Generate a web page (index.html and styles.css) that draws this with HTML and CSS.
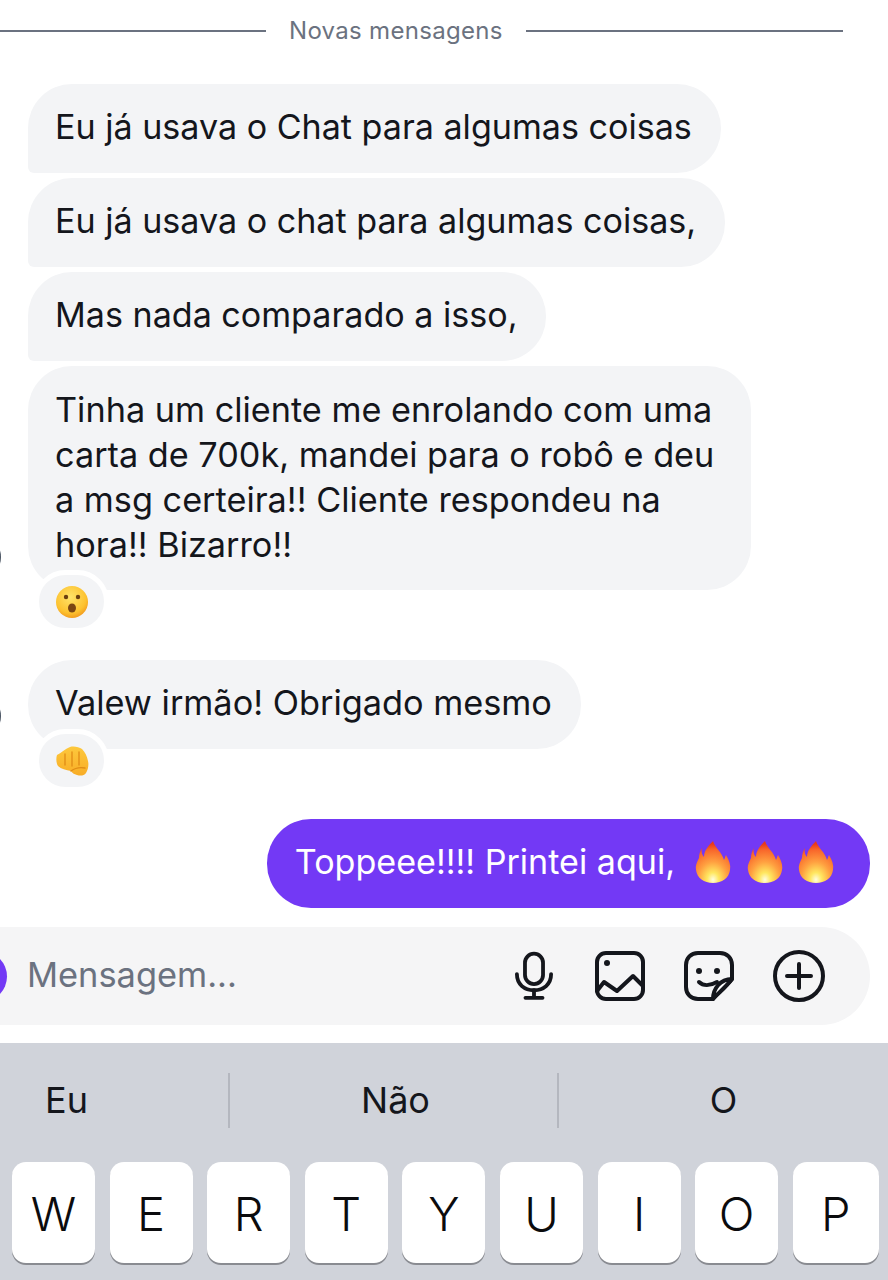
FILE: index.html
```html
<!DOCTYPE html>
<html lang="pt">

<head>
    <meta charset="UTF-8">
    <meta name="viewport" content="width=device-width, initial-scale=1.0">
    <title>Mensagens</title>
    <link rel="stylesheet" href="styles.css">
</head>

<body>
    <svg class="defs" width="0" height="0">
        <defs>
            <radialGradient id="fireFill" cx="50%" cy="92%" r="85%">
                <stop offset="0" stop-color="#fffde0"></stop>
                <stop offset="0.2" stop-color="#ffe760"></stop>
                <stop offset="0.5" stop-color="#ffa040"></stop>
                <stop offset="0.85" stop-color="#f8642a"></stop>
                <stop offset="1" stop-color="#e8391c"></stop>
            </radialGradient>
            <radialGradient id="faceFill" cx="45%" cy="35%" r="70%">
                <stop offset="0" stop-color="#ffe36a"></stop>
                <stop offset="0.7" stop-color="#fdc22f"></stop>
                <stop offset="1" stop-color="#f0921a"></stop>
            </radialGradient>
            <linearGradient id="fistFill" x1="0" y1="0" x2="0" y2="1">
                <stop offset="0" stop-color="#fdc83c"></stop>
                <stop offset="1" stop-color="#f8ad27"></stop>
            </linearGradient>
            <symbol id="fire" viewBox="0 0 36 44">
                <path fill="url(#fireFill)" d="M18 1C20 8 27 12 29 20C30 18 30 17 31 15C34 20 36 25 35 30C34 38 27 43 18 43C9 43 2 38 1 30C0 26 2 22 4 18C4 14 5 11 7 8C6 12 7 15 9 17C9 11 13 6 18 1Z"></path>
            </symbol>
        </defs>
    </svg>

    <div class="page">
        <div class="divider">
            <span class="line first"></span>
            <span class="label">Novas mensagens</span>
            <span class="line"></span>
        </div>

        <div class="thread">
            <div class="bubble">Eu já usava o Chat para algumas coisas</div>
            <div class="bubble">Eu já usava o chat para algumas coisas,</div>
            <div class="bubble">Mas nada comparado a isso,</div>
            <div class="bubble wide has_react">
                Tinha um cliente me enrolando com uma carta de 700k, mandei para o robô e deu a msg certeira!! Cliente respondeu na hora!! Bizarro!!
                <span class="avatar"></span>
                <span class="react">
                    <svg width="34" height="34" viewBox="0 0 34 34">
                        <circle cx="17" cy="17" r="16" fill="url(#faceFill)"></circle>
                        <circle cx="11" cy="12" r="2.2" fill="#6b3f10"></circle>
                        <circle cx="23" cy="12" r="2.2" fill="#6b3f10"></circle>
                        <ellipse cx="17" cy="23" rx="4" ry="4.6" fill="#7a4512"></ellipse>
                    </svg>
                </span>
            </div>
            <div class="bubble solo has_react">
                Valew irmão! Obrigado mesmo
                <span class="avatar"></span>
                <span class="react">
                    <svg width="34" height="34" viewBox="0 0 34 34">
                        <path fill="url(#fistFill)" d="M2 11C6 9 10 5 15 3C19 2 24 3 27 5C30 8 32 12 33 17C34 21 33 26 31 29C29 32 25 32 22 31C19 30 17 29 16 27C11 26 6 25 3 22C1 19 1 14 2 11Z"></path>
                        <path fill="none" stroke="#e08c16" stroke-width="1.3" stroke-linecap="round" d="M10 10V21M17 8V22M24 8V21M16 27C20 24 25 23 30 24"></path>
                    </svg>
                </span>
            </div>
            <div class="bubble mine">
                <span>Toppeee!!!! Printei aqui,</span>
                <span class="fires">
                    <svg width="36" height="44"><use href="#fire"></use></svg>
                    <svg width="36" height="44"><use href="#fire"></use></svg>
                    <svg width="36" height="44"><use href="#fire"></use></svg>
                </span>
            </div>
        </div>

        <div class="composer">
            <span class="camera"></span>
            <span class="placeholder">Mensagem...</span>
            <div class="tools">
                <svg class="mic" width="38" height="50" viewBox="0 0 40 52" fill="none" stroke="#14161c" stroke-width="4" stroke-linecap="round">
                    <rect x="10.5" y="2.5" width="19" height="32" rx="9.5"></rect>
                    <path d="M2 24C2 35 10 41 20 41C30 41 38 35 38 24"></path>
                    <path d="M20 41V49M11 49H29"></path>
                </svg>
                <svg width="50" height="50" viewBox="0 0 50 50" fill="none" stroke="#14161c" stroke-width="4" stroke-linecap="round" stroke-linejoin="round">
                    <rect x="2" y="2" width="46" height="46" rx="9"></rect>
                    <circle cx="12" cy="12" r="3" fill="#14161c" stroke="none"></circle>
                    <path d="M2 40L9 31L22 40L38 25L48 35"></path>
                </svg>
                <svg width="50" height="50" viewBox="0 0 50 50" fill="none" stroke="#14161c" stroke-width="4" stroke-linecap="round" stroke-linejoin="round">
                    <path d="M29 48H14C7 48 2 43 2 36V14C2 7 7 2 14 2H36C43 2 48 7 48 14V28C41 37 33 43 29 48Z"></path>
                    <path fill="#fff" d="M29 48C29 38 36 28 48 28C41 37 33 43 29 48Z"></path>
                    <circle cx="15" cy="20" r="3" fill="#14161c" stroke="none"></circle>
                    <circle cx="33" cy="20" r="3" fill="#14161c" stroke="none"></circle>
                    <path d="M15 31C19 35 26 35 33 31"></path>
                </svg>
                <svg width="52" height="52" viewBox="0 0 52 52" fill="none" stroke="#14161c" stroke-width="4" stroke-linecap="round">
                    <circle cx="26" cy="26" r="24"></circle>
                    <path d="M26 14V38M14 26H38"></path>
                </svg>
            </div>
        </div>

        <div class="keyboard">
            <div class="suggest">
                <div class="word">Eu</div>
                <div class="word">Não</div>
                <div class="word">O</div>
            </div>
            <div class="keys">
                <div class="key">W</div>
                <div class="key">E</div>
                <div class="key">R</div>
                <div class="key">T</div>
                <div class="key">Y</div>
                <div class="key">U</div>
                <div class="key">I</div>
                <div class="key">O</div>
                <div class="key last">P</div>
            </div>
        </div>
    </div>
</body>

</html>
```

FILE: styles.css
```css
* {
    margin: 0;
    padding: 0;
    box-sizing: border-box;
}

body {
    background-color: #fff;
    font-family: Inter, "Liberation Sans", sans-serif;
    color: #14161c;
}

.defs {
    position: absolute;
}

.page {
    display: flex;
    flex-direction: column;
    width: 888px;
    height: 1280px;
    overflow: hidden;
}

/* divider */
.divider {
    display: flex;
    align-items: center;
    gap: 23px;
    height: 62px;
    margin-bottom: 22px;
    padding-right: 45px;
}

.divider .line {
    flex: 1;
    height: 2px;
    background-color: #6b7280;
}

.divider .line.first {
    flex: none;
    width: 266px;
}

.divider .label {
    font-size: 24px;
    line-height: 30px;
    letter-spacing: 0.3px;
    color: #6b7280;
}

/* messages */
.thread {
    display: flex;
    flex-direction: column;
    align-items: flex-start;
    gap: 5px;
    padding-left: 28px;
}

.bubble {
    position: relative;
    padding: 20px 29px 24px 27px;
    background-color: #f3f4f6;
    border-radius: 44px 44px 44px 6px;
    font-size: 34.1px;
    line-height: 45px;
}

.bubble.wide {
    width: 723px;
    padding-top: 21px;
    padding-bottom: 23px;
    border-radius: 44px;
    font-size: 34.25px;
}

.bubble.solo {
    margin-top: 65px;
    border-radius: 44px;
    font-size: 34.3px;
}

.bubble.mine {
    display: flex;
    align-items: center;
    gap: 20px;
    align-self: flex-end;
    margin-top: 65px;
    margin-right: 18px;
    padding: 0 36px 4px 28px;
    height: 89px;
    border-radius: 44px;
    background-color: #7339f5;
    color: #fff;
}

.bubble .fires {
    display: flex;
    gap: 15.5px;
    padding-top: 1px;
}

.react {
    position: absolute;
    left: 6px;
    bottom: -43px;
    display: flex;
    align-items: center;
    justify-content: center;
    width: 75px;
    height: 63px;
    background-color: #f3f4f6;
    border: 5px solid #fff;
    border-radius: 32px;
}

.avatar {
    position: absolute;
    left: -37px;
    bottom: 22px;
    width: 10px;
    height: 22px;
    border-radius: 50%;
    background-color: #4b5563;
}

/* input */
.composer {
    position: relative;
    display: flex;
    align-items: center;
    justify-content: space-between;
    width: 870px;
    height: 98px;
    margin-top: 19px;
    padding: 0 45px 0 27px;
    background-color: #f5f5f6;
    border-radius: 0 49px 49px 0;
}

.composer .camera {
    position: absolute;
    left: -44px;
    top: 24px;
    width: 51px;
    height: 51px;
    border-radius: 50%;
    background-color: #7339f5;
}

.composer .placeholder {
    padding-bottom: 3px;
    font-size: 34.4px;
    color: #6b7280;
}

.tools {
    display: flex;
    align-items: center;
    gap: 39px;
}

.tools .mic {
    margin-right: 3px;
}

/* keyboard */
.keyboard {
    flex: 1;
    margin-top: 18px;
    background-color: #d0d3da;
}

.suggest {
    display: flex;
    height: 119px;
    padding: 30px 0 34px;
}

.word {
    width: 329px;
    padding-left: 4px;
    border-right: 2px solid #b4b7bf;
    font-size: 36px;
    line-height: 55px;
    text-align: center;
}

.word:first-child {
    width: 230px;
    padding-left: 0;
    padding-right: 95px;
}

.word:last-child {
    flex: 1;
    padding-left: 0;
    border-right: 0;
}

.keys {
    display: flex;
    gap: 14.6px;
    padding: 0 9px 0 12px;
}

.key {
    flex: none;
    width: 83px;
    height: 101px;
    background-color: #fff;
    border-radius: 14px;
    box-shadow: 0 2px 0 #898b91;
    font-size: 47px;
    font-weight: 300;
    line-height: 103px;
    text-align: center;
    color: #0b0b0d;
}

.key.last {
    flex: 1;
}
```
